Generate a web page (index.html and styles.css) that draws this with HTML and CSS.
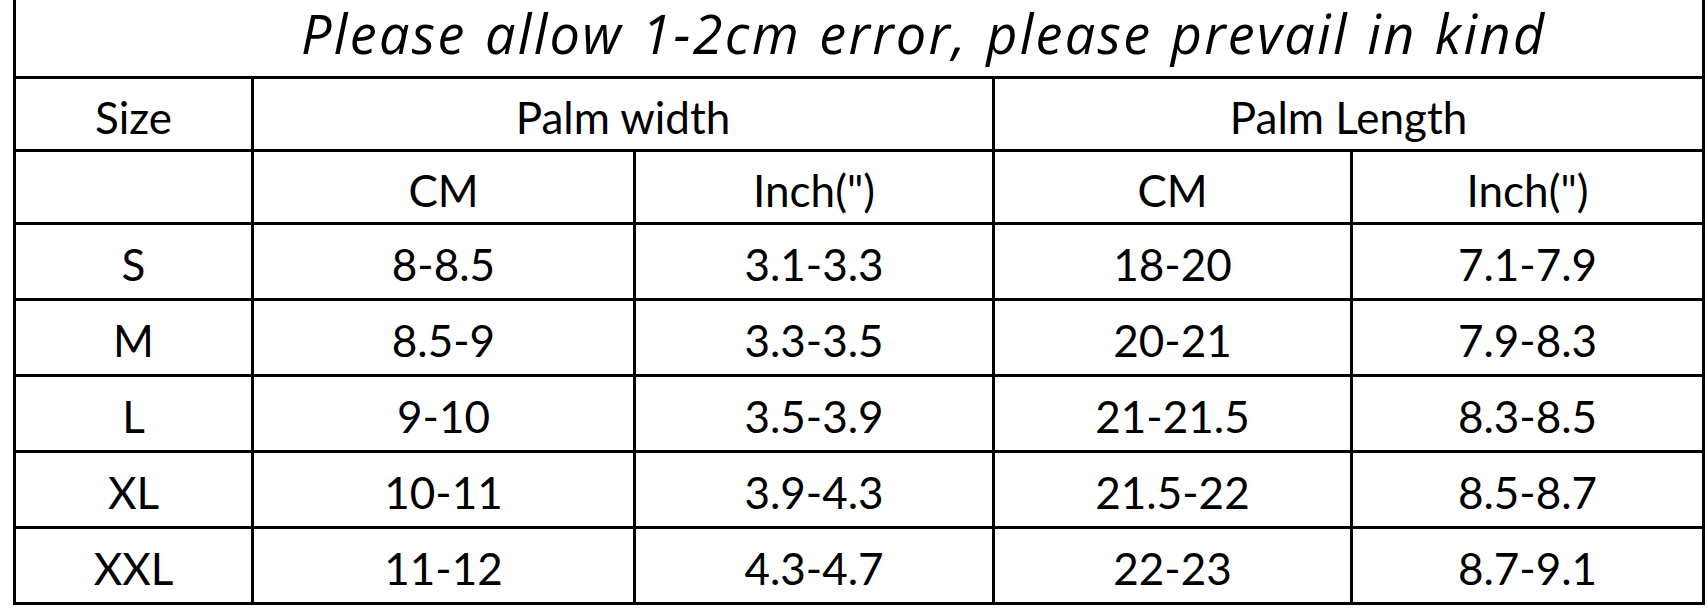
FILE: index.html
```html
<!DOCTYPE html>
<html>
<head>
<meta charset="utf-8">
<link rel="stylesheet" href="styles.css">
</head>
<body>
<table class="size-table">
  <colgroup>
    <col class="c-size">
    <col class="c-pw-cm">
    <col class="c-pw-in">
    <col class="c-pl-cm">
    <col class="c-pl-in">
  </colgroup>
  <tr class="r-title"><td colspan="5" class="title"><span>Please allow 1-2cm error, please prevail in kind</span></td></tr>
  <tr class="r-head"><td>Size</td><td colspan="2">Palm width</td><td colspan="2">Palm Length</td></tr>
  <tr class="r-head"><td></td><td>CM</td><td>Inch(")</td><td>CM</td><td>Inch(")</td></tr>
  <tr class="r-body"><td>S</td><td>8-8.5</td><td>3.1-3.3</td><td>18-20</td><td>7.1-7.9</td></tr>
  <tr class="r-body"><td>M</td><td>8.5-9</td><td>3.3-3.5</td><td>20-21</td><td>7.9-8.3</td></tr>
  <tr class="r-body"><td>L</td><td>9-10</td><td>3.5-3.9</td><td>21-21.5</td><td>8.3-8.5</td></tr>
  <tr class="r-body"><td>XL</td><td>10-11</td><td>3.9-4.3</td><td>21.5-22</td><td>8.5-8.7</td></tr>
  <tr class="r-body"><td>XXL</td><td>11-12</td><td>4.3-4.7</td><td>22-23</td><td>8.7-9.1</td></tr>
</table>
</body>
</html>
```

FILE: styles.css
```css
html, body {
  margin: 0;
  padding: 0;
  background: #ffffff;
}

.size-table {
  margin-left: 13px;
  width: 1689px;
  border-collapse: collapse;
  table-layout: fixed;
  font-family: "Lato", "Liberation Sans", sans-serif;
  font-size: 44px;
  color: #000;
}

.c-size { width: 238px; }
.c-pw-cm { width: 382px; }
.c-pw-in { width: 359px; }
.c-pl-cm { width: 358px; }
.c-pl-in { width: 352px; }

.size-table td {
  border: 3px solid #000;
  text-align: center;
  vertical-align: middle;
  padding: 0;
  line-height: 1;
}

.size-table td.title {
  border-top: none;
  text-align: left;
  padding-left: 285px;
  padding-bottom: 10px;
  font-family: "Open Sans", "DejaVu Sans", sans-serif;
  font-style: italic;
  font-weight: 400;
  font-size: 54px;
  letter-spacing: 2.3px;
  word-spacing: 2px;
}

.r-title { height: 77px; }
.r-head { height: 73px; }
.r-body { height: 76px; }

.r-head td, .r-body td { padding-top: 6px; }
```
